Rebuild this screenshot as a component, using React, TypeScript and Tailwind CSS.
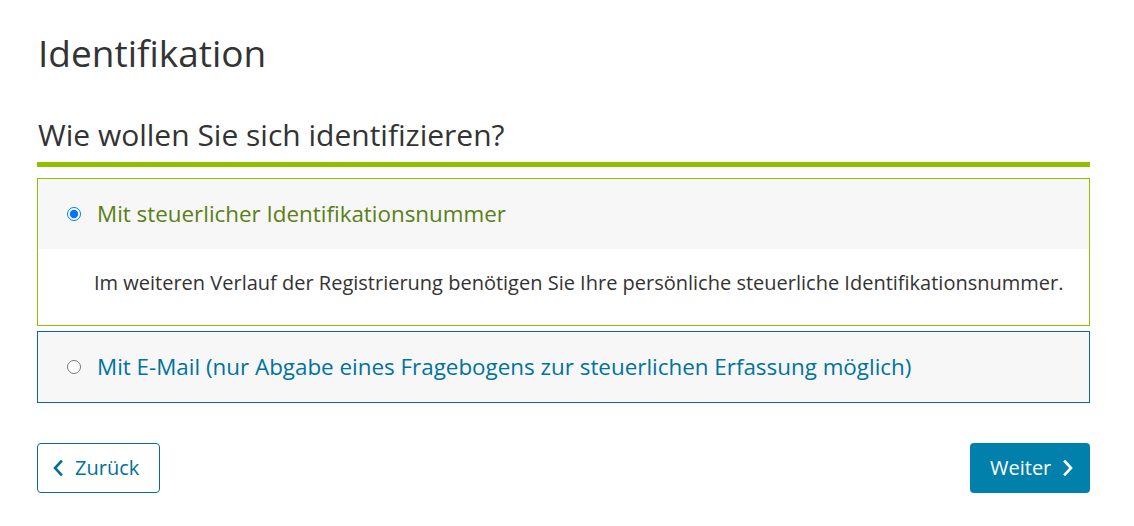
import React from "react";

export default function App() {
  return (
    <div className="w-[1134px] h-[526px] bg-white text-[#333333]" style={{ fontFamily: '"Open Sans", "Liberation Sans", sans-serif' }}>
      <div className="pl-[37px] pr-[44px] pt-[29px]">
        <h1 className="text-[37px] leading-[48px] font-normal pl-[1px]">Identifikation</h1>
        <h2 className="mt-[38px] text-[30px] leading-[40px] pl-[1px] pb-[7px] border-b-[5px] border-[#8fc000]">
          Wie wollen Sie sich identifizieren?
        </h2>
        <div className="mt-[11px] border border-[#8fc000]">
          <label className="flex items-center h-[70px] bg-[#f7f7f7] pl-[29px]">
            <input type="radio" name="id" defaultChecked className="m-0 w-[14px] h-[14px]" />
            <span className="ml-[16px] text-[22.4px] text-[#5a8016]">Mit steuerlicher Identifikationsnummer</span>
          </label>
          <div className="h-[76px] flex items-center pb-[8px] pl-[56px] text-[20px]">
            Im weiteren Verlauf der Registrierung benötigen Sie Ihre persönliche steuerliche Identifikationsnummer.
          </div>
        </div>
        <div className="mt-[5px] border border-[#0a6b94] bg-[#f7f7f7]">
          <label className="flex items-center h-[70px] pl-[29px]">
            <input type="radio" name="id" className="m-0 w-[14px] h-[14px]" />
            <span className="ml-[16px] text-[22.4px] text-[#0073a0]">Mit E-Mail (nur Abgabe eines Fragebogens zur steuerlichen Erfassung möglich)</span>
          </label>
        </div>
        <div className="mt-[40px] flex justify-between">
          <button className="h-[50px] w-[123px] border border-[#0a6b94] rounded-[4px] flex items-center pl-[14px] gap-[11px] text-[20px] text-[#00709a]">
            <svg width="12" height="18" viewBox="0 0 12 18" fill="none" stroke="currentColor" strokeWidth="2.6" strokeLinecap="square">
              <path d="M9 2.5 L3 9 L9 15.5" />
            </svg>
            <span>Zurück</span>
          </button>
          <button className="h-[50px] w-[120px] rounded-[4px] bg-[#0080ab] flex items-center pl-[20px] gap-[11px] text-[20px] text-white">
            <span>Weiter</span>
            <svg width="12" height="18" viewBox="0 0 12 18" fill="none" stroke="currentColor" strokeWidth="2.6" strokeLinecap="square">
              <path d="M3 2.5 L9 9 L3 15.5" />
            </svg>
          </button>
        </div>
      </div>
    </div>
  );
}
